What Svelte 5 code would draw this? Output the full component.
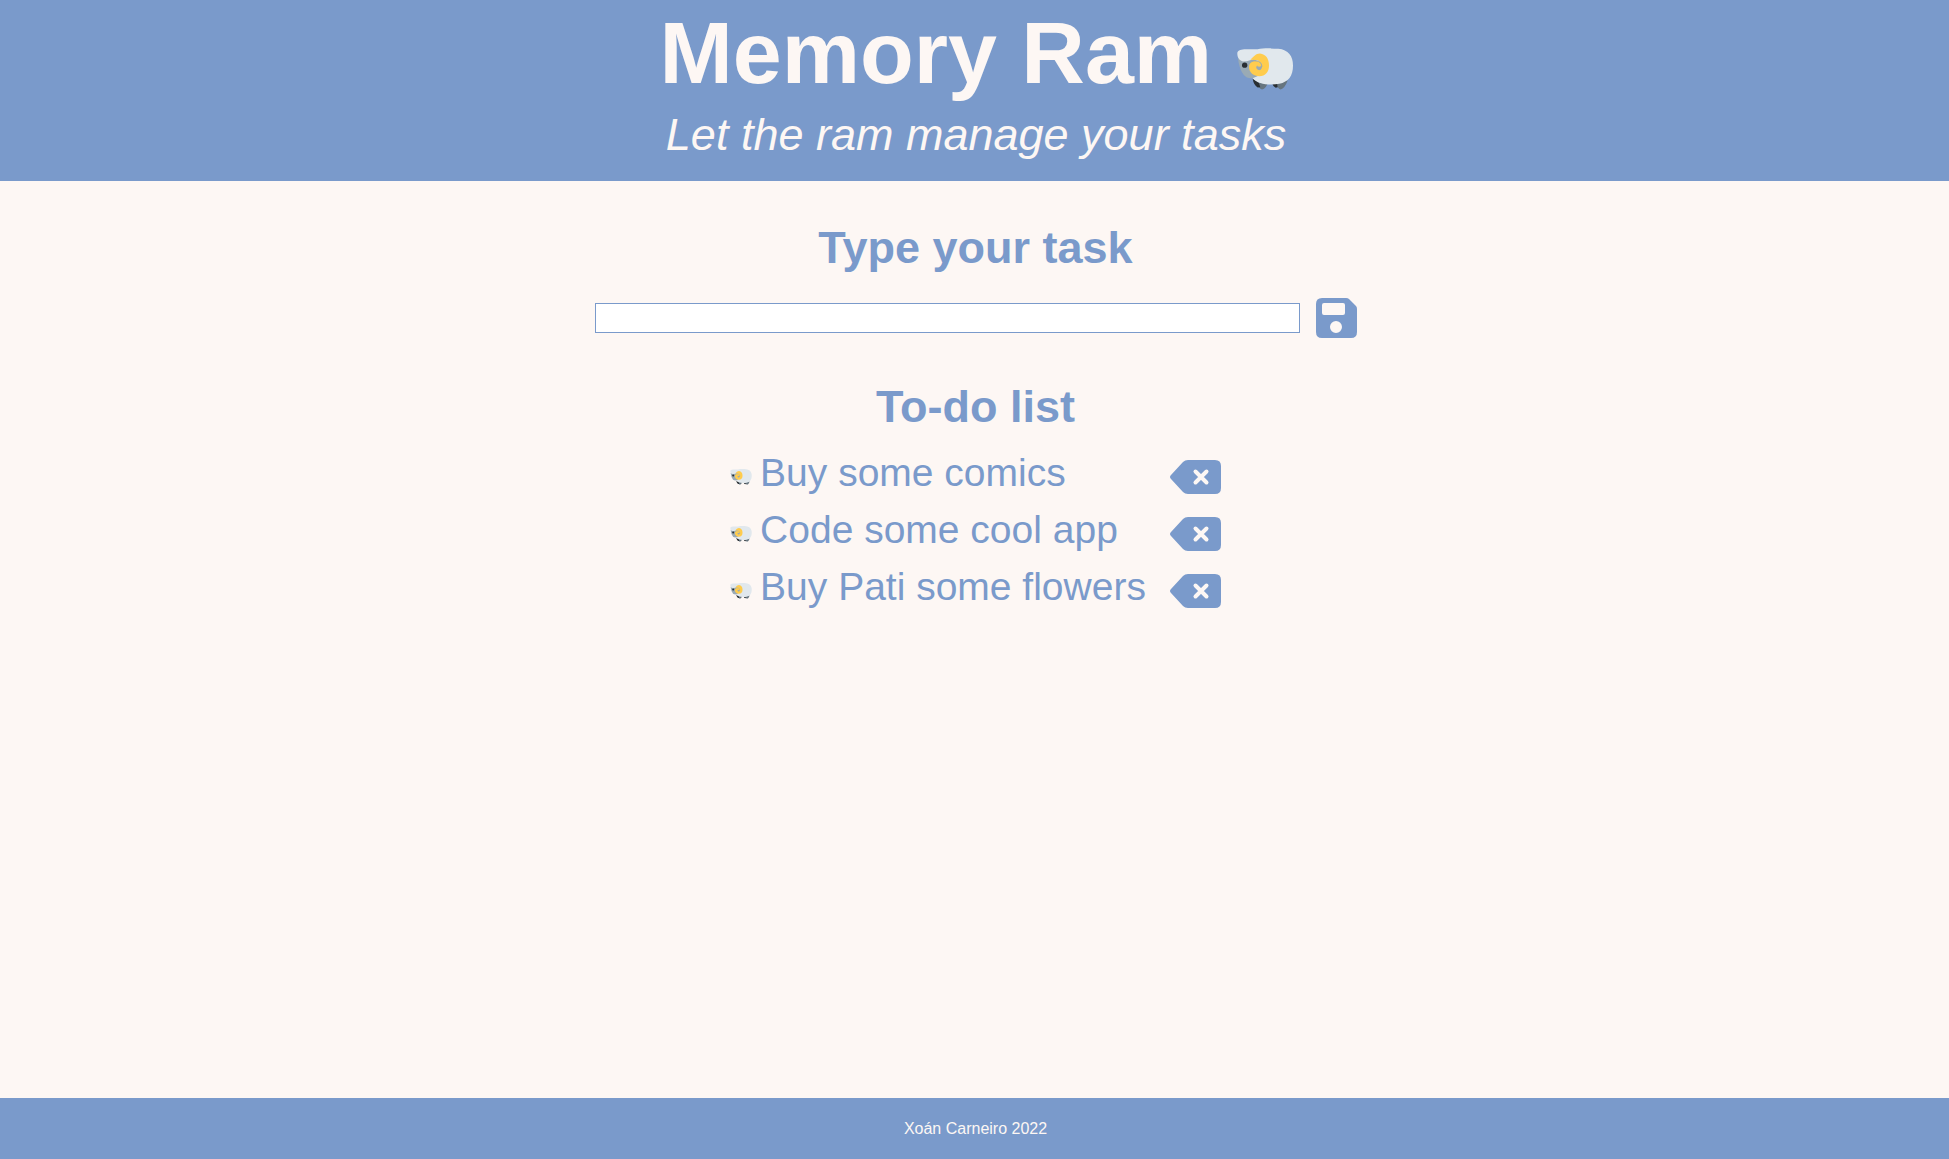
<script>
  let task = $state('');
  let tasks = $state(['Buy some comics', 'Code some cool app', 'Buy Pati some flowers']);

  function save(event) {
    event.preventDefault();
    const text = task.trim();
    if (!text) return;
    tasks.push(text);
    task = '';
  }

  function remove(index) {
    tasks.splice(index, 1);
  }
</script>

{#snippet ram(kind)}
  <svg class={kind} viewBox="48 41 168 125" aria-hidden="true">
    <path fill="#66757f" d="M108 145L140 145Q136 163 123 165Q113 163 108 145ZM164 145L200 138Q191 162 179 165Q169 163 164 145Z" />
    <path fill="#292f33" d="M95 133Q98 152 110 159L118 158L113 143ZM154 148Q157 158 164 160L170 158L168 147Z" />
    <path fill="#99aab5" d="M51 72Q55 104 68 121Q78 134 98 131L120 118L110 62Z" />
    <path fill="#e1e8ed" d="M49 58C48 49 56 45 70 44L110 44C126 41 152 41 172 43C202 46 216 65 216 93C216 125 202 142 175 148C143 154 109 148 95 131L112 124L105 70C95 76 81 81 66 81C54 78 49 69 49 58Z" />
    <circle cx="71" cy="92" r="8" fill="#292f33" />
    <path fill="#ffcc4d" d="M88 76C96 68 104 57 117 57C134 59 144 72 144 93C144 113 133 125 115 125C98 125 84 113 84 98C84 88 92 79 105 79L116 80C107 76 98 77 88 76Z" />
    <path fill="none" stroke="#99aab5" stroke-width="3" stroke-linecap="round" d="M86 83Q99 76 112 80Q122 84 123 95" />
    <path fill="#99aab5" d="M109 92Q103 97 107 103Q113 110 119 106Q124 102 123 92Q118 99 109 95Z" />
  </svg>
{/snippet}

<div class="page">
  <header>
    <h1>Memory Ram {@render ram('ram-large')}</h1>
    <p>Let the ram manage your tasks</p>
  </header>

  <main>
    <form onsubmit={save}>
      <h2><label for="task">Type your task</label></h2>
      <div class="entry">
        <input id="task" type="text" autocomplete="off" bind:value={task} />
        <button type="submit" aria-label="Save task">
          <svg class="save" viewBox="0 0 41 40" aria-hidden="true">
            <path fill="currentColor" fill-rule="evenodd" d="M6 0H30Q32 0 33 1L40 8Q41 9 41 11V34Q41 40 35 40H6Q0 40 0 34V6Q0 0 6 0ZM8 5Q6 5 6 7V15Q6 17 8 17H27Q29 17 29 15V7Q29 5 27 5ZM20 23A6 6 0 1 0 20 35A6 6 0 1 0 20 23Z" />
          </svg>
        </button>
      </div>
    </form>

    <section>
      <h2>To-do list</h2>
      <ul>
        {#each tasks as item, index}
          <li>
            {@render ram('ram-small')}
            <span>{item}</span>
            <button type="button" aria-label={`Delete ${item}`} onclick={() => remove(index)}>
              <svg class="delete" viewBox="0 0 51 34" aria-hidden="true">
                <path fill="currentColor" d="M18 0H45Q51 0 51 6V28Q51 34 45 34H18Q15 34 13 32L1 19Q-1 17 1 15L13 2Q15 0 18 0Z" />
                <path fill="none" stroke="#fdf7f4" stroke-width="4" stroke-linecap="round" d="M25.500 11.500L36.500 22.500M36.500 11.500L25.500 22.500" />
              </svg>
            </button>
          </li>
        {/each}
      </ul>
    </section>
  </main>

  <footer>Xoán Carneiro 2022</footer>
</div>

<style>
  :global(body) {
    margin: 0;
  }

  .page {
    display: flex;
    flex-direction: column;
    min-height: 100vh;
    background: #fdf7f4;
    color: #7a9acb;
    font-family: "Liberation Sans", Arial, sans-serif;
  }

  header {
    padding: 1px 0 20px 3px;
    background: #7a9acb;
    color: #fdf7f4;
    text-align: center;
  }

  h1,
  h2,
  p,
  ul {
    margin: 0;
  }

  h1 {
    font-size: 88px;
    line-height: 104px;
  }

  header p {
    padding-top: 3px;
    font-size: 45px;
    font-style: italic;
    line-height: 53px;
  }

  main {
    flex: 1;
    display: flex;
    flex-direction: column;
    align-items: center;
    gap: 42px;
    padding: 40px 16px 40px 18px;
  }

  form {
    width: 100%;
  }

  h2 {
    font-size: 45px;
    line-height: 53px;
    text-align: center;
  }

  .entry {
    display: flex;
    align-items: center;
    justify-content: center;
    gap: 16px;
    margin-top: 24px;
  }

  input {
    box-sizing: border-box;
    flex: 0 1 705px;
    min-width: 0;
    height: 30px;
    padding: 4px 8px;
    border: 1px solid #7a9acb;
    background: #fff;
    color: inherit;
    font: 16px "Liberation Sans", Arial, sans-serif;
  }

  button {
    flex: none;
    display: flex;
    padding: 0;
    border: 0;
    background: none;
    color: inherit;
    cursor: pointer;
  }

  ul {
    padding: 15px 0 0;
    list-style: none;
  }

  li {
    display: flex;
    align-items: center;
    height: 57px;
    font-size: 39px;
    line-height: 48px;
  }

  li span {
    flex: 1;
    padding: 0 24px 8px 8px;
  }

  .ram-large {
    width: 56px;
    height: 42px;
    margin-bottom: -7px;
    vertical-align: baseline;
  }

  .ram-small {
    width: 22px;
    height: 16px;
  }

  .save {
    width: 41px;
    height: 40px;
  }

  .delete {
    width: 51px;
    height: 34px;
  }

  footer {
    padding: 20px 0 20px 2px;
    background: #7a9acb;
    color: #fdf7f4;
    font-size: 16px;
    line-height: 21px;
    text-align: center;
  }
</style>
